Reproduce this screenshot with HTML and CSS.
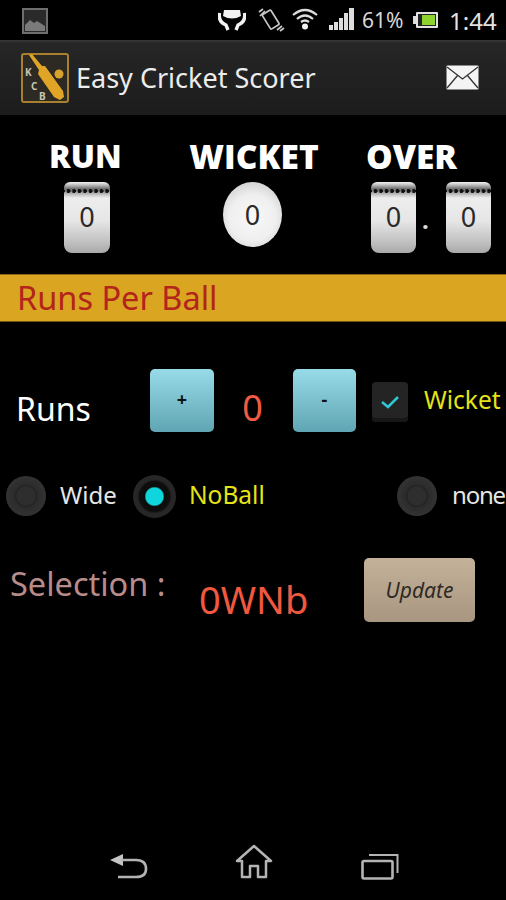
FILE: index.html
```html
<!DOCTYPE html>
<html lang="en">
<head>
  <meta charset="UTF-8" />
  <title>Easy Cricket Scorer</title>
  <meta name="viewport" content="width=device-width, initial-scale=1.0" />
  <link rel="stylesheet" href="styles.css">
</head>
<body>
  <div class="screen">
    <div class="status-bar">
      <svg class="ic-picture" width="26" height="26" viewBox="0 0 26 26">
        <rect x="1" y="1" width="24" height="24" fill="#2a2a2a" stroke="#6e6e6e" stroke-width="2"/>
        <path d="M3 23V17L8 12L12 15L15 13L23 18V23Z" fill="#7a7a7a"/>
      </svg>
      <div class="status-right">
        <svg class="ic-hands" width="28" height="22" viewBox="0 0 28 22">
          <path d="M6 1H22L23 7Q14 12 5 7Z" fill="#f2f2f2"/>
          <path d="M1.500 4Q0 13 8 16L10 21M26.500 4Q28 13 20 16L18 21" fill="none" stroke="#f2f2f2" stroke-width="3.4"/>
        </svg>
        <svg class="ic-vibrate" width="29" height="24" viewBox="0 0 29 24">
          <g fill="none" stroke="#c8c8c8" stroke-width="1.7">
            <rect x="10" y="3" width="10" height="17" rx="1" transform="rotate(-32 15 12)"/>
            <path d="M3 4L7 1M4 8L9 3M21 22L26 18M24 23L28 20"/>
          </g>
        </svg>
        <svg class="ic-wifi" width="26" height="22" viewBox="0 0 26 22">
          <g fill="none" stroke="#dcdcdc" stroke-width="2.2">
            <path d="M1 7Q13 -3 25 7"/>
            <path d="M5 11Q13 4 21 11"/>
            <path d="M9 14Q13 11 17 14"/>
          </g>
          <circle cx="13" cy="18.5" r="3" fill="#f2f2f2"/>
        </svg>
        <svg class="ic-signal" width="25" height="22" viewBox="0 0 25 22">
          <rect x="0" y="17" width="4" height="5" fill="#ddd"/>
          <rect x="5" y="14" width="4" height="8" fill="#ddd"/>
          <rect x="10" y="10" width="4" height="12" fill="#ddd"/>
          <rect x="15" y="5" width="4" height="17" fill="#ddd"/>
          <rect x="20" y="0" width="5" height="22" fill="#ddd"/>
        </svg>
        <span class="battery-pct">61%</span>
        <svg class="ic-battery" width="25" height="16" viewBox="0 0 25 16">
          <rect x="0" y="4" width="3" height="8" fill="#ddd"/>
          <rect x="3" y="0" width="22" height="16" rx="1" fill="#e2e2e2"/>
          <rect x="5" y="2" width="18" height="12" fill="#222"/>
          <rect x="9" y="3" width="13" height="10" fill="#8fd42e"/>
        </svg>
        <span class="clock">1:44</span>
      </div>
    </div>

    <div class="app-bar">
      <svg class="logo" width="48" height="50" viewBox="0 0 48 50">
        <rect x="1" y="1" width="46" height="48" rx="2" fill="#2c2a22" stroke="#a8802e" stroke-width="2"/>
        <path d="M8 2L11 1L21 13L24 13L42 38L43 44L39 47L33 44L17 21L18 17Z" fill="#e0a526"/>
        <circle cx="38" cy="21" r="4.5" fill="#d9a22c"/>
        <text x="4" y="23" class="logo-letter">K</text>
        <text x="10" y="37" class="logo-letter">C</text>
        <text x="18" y="47" class="logo-letter">B</text>
      </svg>
      <span class="app-title">Easy Cricket Scorer</span>
      <svg class="ic-mail" width="33" height="25" viewBox="0 0 33 25">
        <rect x="0.5" y="0.5" width="32" height="24" rx="1" fill="#f4f4f4"/>
        <path d="M1 2L16.5 14L32 2M1 23L12 10M32 23L21 10" fill="none" stroke="#333" stroke-width="1.3"/>
      </svg>
    </div>

    <div class="score">
      <div class="score-col col-run">
        <div class="score-label label-run">RUN</div>
        <div class="score-tiles">
          <div class="tile"><span class="tile-num">0</span></div>
        </div>
      </div>
      <div class="score-col col-wicket">
        <div class="score-label">WICKET</div>
        <div class="score-tiles">
          <div class="ball">0</div>
        </div>
      </div>
      <div class="score-col col-over">
        <div class="score-label">OVER</div>
        <div class="score-tiles">
          <div class="tile tile-over"><span class="tile-num">0</span></div>
          <span class="over-dot">.</span>
          <div class="tile tile-over"><span class="tile-num">0</span></div>
        </div>
      </div>
    </div>

    <div class="band">Runs Per Ball</div>

    <div class="runs-row">
      <span class="runs-label">Runs</span>
      <button class="step-btn step-plus">+</button>
      <span class="runs-value">0</span>
      <button class="step-btn step-minus">-</button>
      <span class="check">
        <svg width="20" height="16" viewBox="0 0 20 16">
          <path d="M2 8L8 13L18 3" fill="none" stroke="#2fc6d6" stroke-width="2.6"/>
        </svg>
      </span>
      <span class="check-label">Wicket</span>
    </div>

    <div class="radio-row">
      <span class="radio"></span>
      <span class="radio-label label-wide">Wide</span>
      <span class="radio radio-on"></span>
      <span class="radio-label label-noball">NoBall</span>
      <span class="radio radio-none"></span>
      <span class="radio-label label-none">none</span>
    </div>

    <div class="selection-row">
      <span class="selection-label">Selection :</span>
      <span class="selection-value">0WNb</span>
      <button class="update-btn">Update</button>
    </div>

    <div class="nav-bar">
      <svg class="ic-back" width="38" height="27" viewBox="0 0 38 27">
        <path d="M0 7L13 1V13Z" fill="#c4c4c4"/>
        <path d="M11 7H26Q36 7 36 16Q36 24 26 24H8" fill="none" stroke="#b4b4b4" stroke-width="2.6"/>
      </svg>
      <svg class="ic-home" width="38" height="35" viewBox="0 0 38 35">
        <path d="M2 17L19 2L36 17H31V33H23V22H15V33H7V17Z" fill="none" stroke="#b4b4b4" stroke-width="2.5" stroke-linejoin="round"/>
      </svg>
      <svg class="ic-recent" width="38" height="27" viewBox="0 0 38 27">
        <rect x="1.5" y="8" width="30" height="17.5" rx="1.5" fill="none" stroke="#b4b4b4" stroke-width="2.6"/>
        <path d="M8 2H36.500V20" fill="none" stroke="#b4b4b4" stroke-width="2"/>
      </svg>
    </div>
  </div>
</body>
</html>
```

FILE: styles.css
```css
html, body {
  margin: 0;
  background: #000;
}

.screen {
  width: 506px;
  height: 900px;
  overflow: hidden;
  position: relative;
  background: #000;
  font-family: "Noto Sans", "Open Sans", sans-serif;
  color: #fff;
}

/* status bar */
.status-bar {
  height: 40px;
  display: flex;
  align-items: center;
  padding-left: 22px;
  box-sizing: border-box;
}

.ic-picture {
  margin-top: 1px;
}

.status-right {
  display: flex;
  align-items: center;
  margin-left: 170px;
}

.ic-vibrate { margin-left: 10px; }
.ic-wifi { margin-left: 7px; margin-top: -2px; }
.ic-signal { margin-left: 11px; margin-top: -2px; }

.battery-pct {
  margin-left: 8px;
  width: 43px;
  font-size: 21px;
  color: #d8d8d8;
  white-space: nowrap;
}

.ic-battery { margin-left: 8px; }

.clock {
  margin-left: 11px;
  font-size: 24px;
  color: #e2e2e2;
  white-space: nowrap;
}

/* action bar */
.app-bar {
  height: 75px;
  display: flex;
  align-items: center;
  padding-left: 21px;
  box-sizing: border-box;
  background: linear-gradient(#3a3a3a 0, #262626 3px, #1c1c1c 100%);
}

.logo-letter {
  font-size: 10px;
  font-weight: bold;
  fill: #c9c4b0;
  font-family: "Noto Sans", sans-serif;
}

.app-title {
  margin-left: 7px;
  font-size: 27px;
  color: #ececec;
  white-space: nowrap;
  width: 370px;
}

/* score board */
.score {
  display: flex;
  padding-top: 19px;
  height: 159px;
  box-sizing: border-box;
}

.score-label {
  font-family: "Open Sans", sans-serif;
  font-size: 33.500px;
  font-weight: 800;
  line-height: 44px;
  text-align: center;
  white-space: nowrap;
}

.label-run { font-size: 32px; }

.score-tiles {
  display: flex;
  margin-top: 4px;
}

.col-run { margin-left: 49px; width: 72px; }
.col-run .score-tiles { padding-left: 15px; }
.col-wicket { margin-left: 68px; width: 130px; }
.col-wicket .score-tiles { padding-left: 34px; }
.col-over { margin-left: 47px; width: 91px; }
.col-over .score-tiles { padding-left: 5px; }

.tile {
  width: 46px;
  height: 71px;
  flex: none;
  box-sizing: border-box;
  border-radius: 6px 6px 8px 8px;
  display: flex;
  justify-content: center;
  padding-top: 17px;
  background-image:
    radial-gradient(circle at 2.500px 9px, #111 1.8px, transparent 2.2px),
    linear-gradient(#f4f4f4 0, #bdbdbd 3px, #6a6a6a 7px, #c9c9c9 13px, #ededed 16px, #e6e6e6 55%, #c4c4c4 82%, #a9a9a9 100%);
  background-size: 5.500px 14px, 100% 100%;
  background-repeat: repeat-x, no-repeat;
  background-position: 2px 0, 0 0;
}

.tile-over { width: 45px; }

.tile-num {
  font-size: 27px;
  line-height: 36px;
  color: #2a2a2a;
}

.ball {
  width: 59px;
  height: 65px;
  flex: none;
  border-radius: 50%;
  background: radial-gradient(circle at 50% 55%, #f8f8f8 0, #efefef 50%, #cfcfcf 82%, #a8a8a8 100%);
  color: #2a2a2a;
  font-size: 27px;
  line-height: 66px;
  text-align: center;
}

.over-dot {
  width: 30px;
  flex: none;
  box-sizing: border-box;
  padding-left: 6px;
  font-size: 24px;
  line-height: 76px;
  font-weight: bold;
  color: #ddd;
}

/* section band */
.band {
  height: 48px;
  box-sizing: border-box;
  padding-left: 17px;
  font-size: 32.500px;
  line-height: 46px;
  background: #daa520;
  border-top: 1px solid #8a6a14;
  border-bottom: 1px solid #6e5510;
  color: #b2241c;
}

/* runs row */
.runs-row {
  display: flex;
  align-items: flex-start;
  margin-top: 47px;
  height: 63px;
  padding-left: 16px;
}

.runs-label {
  width: 134px;
  flex: none;
  font-size: 32px;
  line-height: 44px;
  margin-top: 18px;
}

.step-btn {
  width: 64px;
  height: 63px;
  flex: none;
  padding: 0 0 4px;
  border: none;
  border-radius: 5px;
  background: linear-gradient(#98dbe8, #60a5b3);
  color: #111;
  font-family: "Noto Sans", sans-serif;
  font-size: 18px;
  font-weight: bold;
}

.step-minus { width: 63px; }

.runs-value {
  width: 77px;
  flex: none;
  margin: 14px 2px 0 0;
  text-align: center;
  font-size: 36px;
  line-height: 50px;
  color: #ef5b43;
}

.check {
  width: 36px;
  height: 40px;
  margin: 13px 0 0 16px;
  flex: none;
  box-sizing: border-box;
  padding-top: 11px;
  text-align: center;
  border-radius: 4px;
  background: #242424;
  box-shadow: inset 0 -4px 0 #171717;
}

.check-label {
  margin: 13px 0 0 16px;
  font-size: 24.500px;
  line-height: 36px;
  color: #e4e419;
  white-space: nowrap;
}

/* radio row */
.radio-row {
  display: flex;
  align-items: center;
  margin-top: 43px;
  height: 42px;
  padding-left: 6px;
}

.radio {
  width: 40px;
  height: 40px;
  flex: none;
  box-sizing: border-box;
  border-radius: 50%;
  background: radial-gradient(circle, #2e2e2e 0, #2e2e2e 9px, #232323 10px, #2c2c2c 12px, #3a3a3a 100%);
}

.radio-on {
  width: 43px;
  height: 43px;
  background: radial-gradient(circle, #0fd6dc 0, #0fd6dc 8.500px, #0c0c0c 10px, #0e0e0e 15px, #262626 17px, #2a2a2a 100%);
}

.radio-label {
  font-size: 24px;
  line-height: 34px;
  margin-bottom: 2px;
  white-space: nowrap;
  color: #e6e6e6;
}

.label-wide { margin-left: 14px; width: 73px; flex: none; }
.label-noball { margin-left: 13px; width: 208px; flex: none; font-size: 24.500px; color: #e4e419; }
.label-none { margin-left: 15px; letter-spacing: -1.200px; }

/* selection row */
.selection-row {
  display: flex;
  align-items: flex-start;
  margin-top: 41px;
  height: 64px;
  padding-left: 10px;
}

.selection-label {
  width: 189px;
  flex: none;
  font-size: 32.500px;
  line-height: 44px;
  margin-top: 4px;
  color: #b98c8c;
  white-space: nowrap;
}

.selection-value {
  width: 165px;
  flex: none;
  font-size: 38px;
  line-height: 50px;
  margin-top: 16px;
  color: #f0583f;
}

.update-btn {
  width: 111px;
  height: 64px;
  flex: none;
  padding: 0;
  border: none;
  border-radius: 5px;
  background: linear-gradient(#c3b19a, #a99680);
  color: #2e2a24;
  font-family: "Noto Sans", sans-serif;
  font-size: 21px;
  font-style: italic;
}

/* nav buttons */
.nav-bar {
  position: absolute;
  left: 110px;
  bottom: 20px;
  display: flex;
  align-items: flex-end;
}

.ic-home { margin-left: 87px; margin-bottom: 1px; }
.ic-recent { margin-left: 88px; }
```
